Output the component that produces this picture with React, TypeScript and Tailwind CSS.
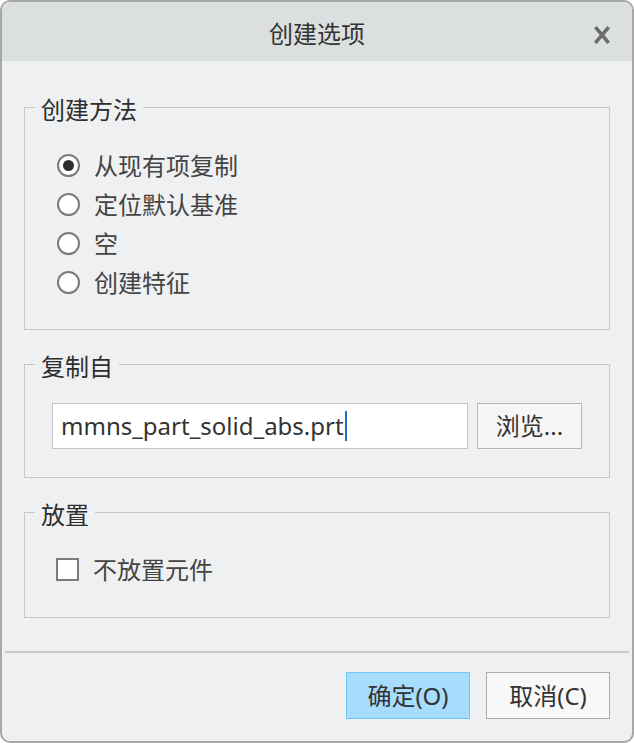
import type { ReactNode } from 'react';

const fontStack = "font-['Noto_Sans','Noto_Sans_CJK_SC',sans-serif]";

function Radio({ label, checked }: { label: string; checked?: boolean }) {
  return (
    <label className="flex h-[39px] items-center gap-[14px]">
      <span className="flex h-[23px] w-[23px] items-center justify-center rounded-full border-2 border-[#7b7b7b] bg-white">
        {checked && <span className="h-[11px] w-[11px] rounded-full bg-[#2f2f2f]" />}
      </span>
      <span className="leading-none text-[#444]">{label}</span>
    </label>
  );
}

function Group({ title, height, children }: { title: string; height: string; children: ReactNode }) {
  return (
    <fieldset className={`${height} border border-[#c6c8ca]`}>
      <legend className="ml-[10px] px-[6px] text-[24px] leading-[32px] text-[#2e2e2e]">
        <span className="relative top-[3px]">{title}</span>
      </legend>
      {children}
    </fieldset>
  );
}

export default function App() {
  return (
    <div className={`${fontStack} flex h-[743px] w-[634px] flex-col overflow-hidden rounded-[10px] border-2 border-[#a7a7a7] bg-[#eff0f2] text-[24px]`}>
      {/* title bar */}
      <div className="relative flex h-[59px] shrink-0 items-center justify-center bg-[#dcdfe0] text-[#333]">
        <span className="mt-[4px]">创建选项</span>
        <svg
          className="absolute right-[22px] top-[24px]"
          width="16"
          height="18"
          viewBox="0 0 16 18"
          fill="none"
          stroke="#6c6c6c"
          strokeWidth="3.6"
          strokeLinecap="square"
        >
          <path d="M2.5 2.5 13.5 15.5" />
          <path d="M13.5 2.5 2.5 15.5" />
        </svg>
      </div>

      <div className="flex flex-1 flex-col px-[22px] pt-[30px]">
        <Group title="创建方法" height="h-[239px]">
          <div className="flex flex-col pl-[32px] pt-[23px]">
            <Radio label="从现有项复制" checked />
            <Radio label="定位默认基准" />
            <Radio label="空" />
            <Radio label="创建特征" />
          </div>
        </Group>

        <div className="mt-[18px]">
          <Group title="复制自" height="h-[130px]">
            <div className="flex gap-[9px] pl-[27px] pt-[23px]">
              <div className="flex h-[46px] w-[416px] items-center border border-[#c4c6c8] bg-white pl-[8px] text-[#333]">
                <span>mmns_part_solid_abs.prt</span>
                <span className="ml-[1px] h-[30px] w-[2px] bg-[#1e6fd0]" />
              </div>
              <button className="h-[46px] w-[105px] border border-[#b4b6b8] bg-[#f6f6f6] text-[#333]">
                浏览...
              </button>
            </div>
          </Group>
        </div>

        <div className="mt-[18px]">
          <Group title="放置" height="h-[122px]">
            <label className="ml-[31px] mt-[22px] flex h-[39px] items-center gap-[14px]">
              <span className="h-[23px] w-[23px] border-2 border-[#7b7b7b] bg-white" />
              <span className="text-[#444]">不放置元件</span>
            </label>
          </Group>
        </div>
      </div>

      <div className="mx-[3px] h-[2px] shrink-0 bg-[#c9cacc]" />

      <div className="flex h-[88px] shrink-0 justify-end gap-[16px] pr-[22px] pt-[19px]">
        <button className="h-[47px] w-[124px] border border-[#70c6f4] bg-[#a6ddfd] text-[#333]">确定(O)</button>
        <button className="h-[47px] w-[124px] border border-[#adadad] bg-[#f8f8f8] text-[#333]">取消(C)</button>
      </div>
    </div>
  );
}
